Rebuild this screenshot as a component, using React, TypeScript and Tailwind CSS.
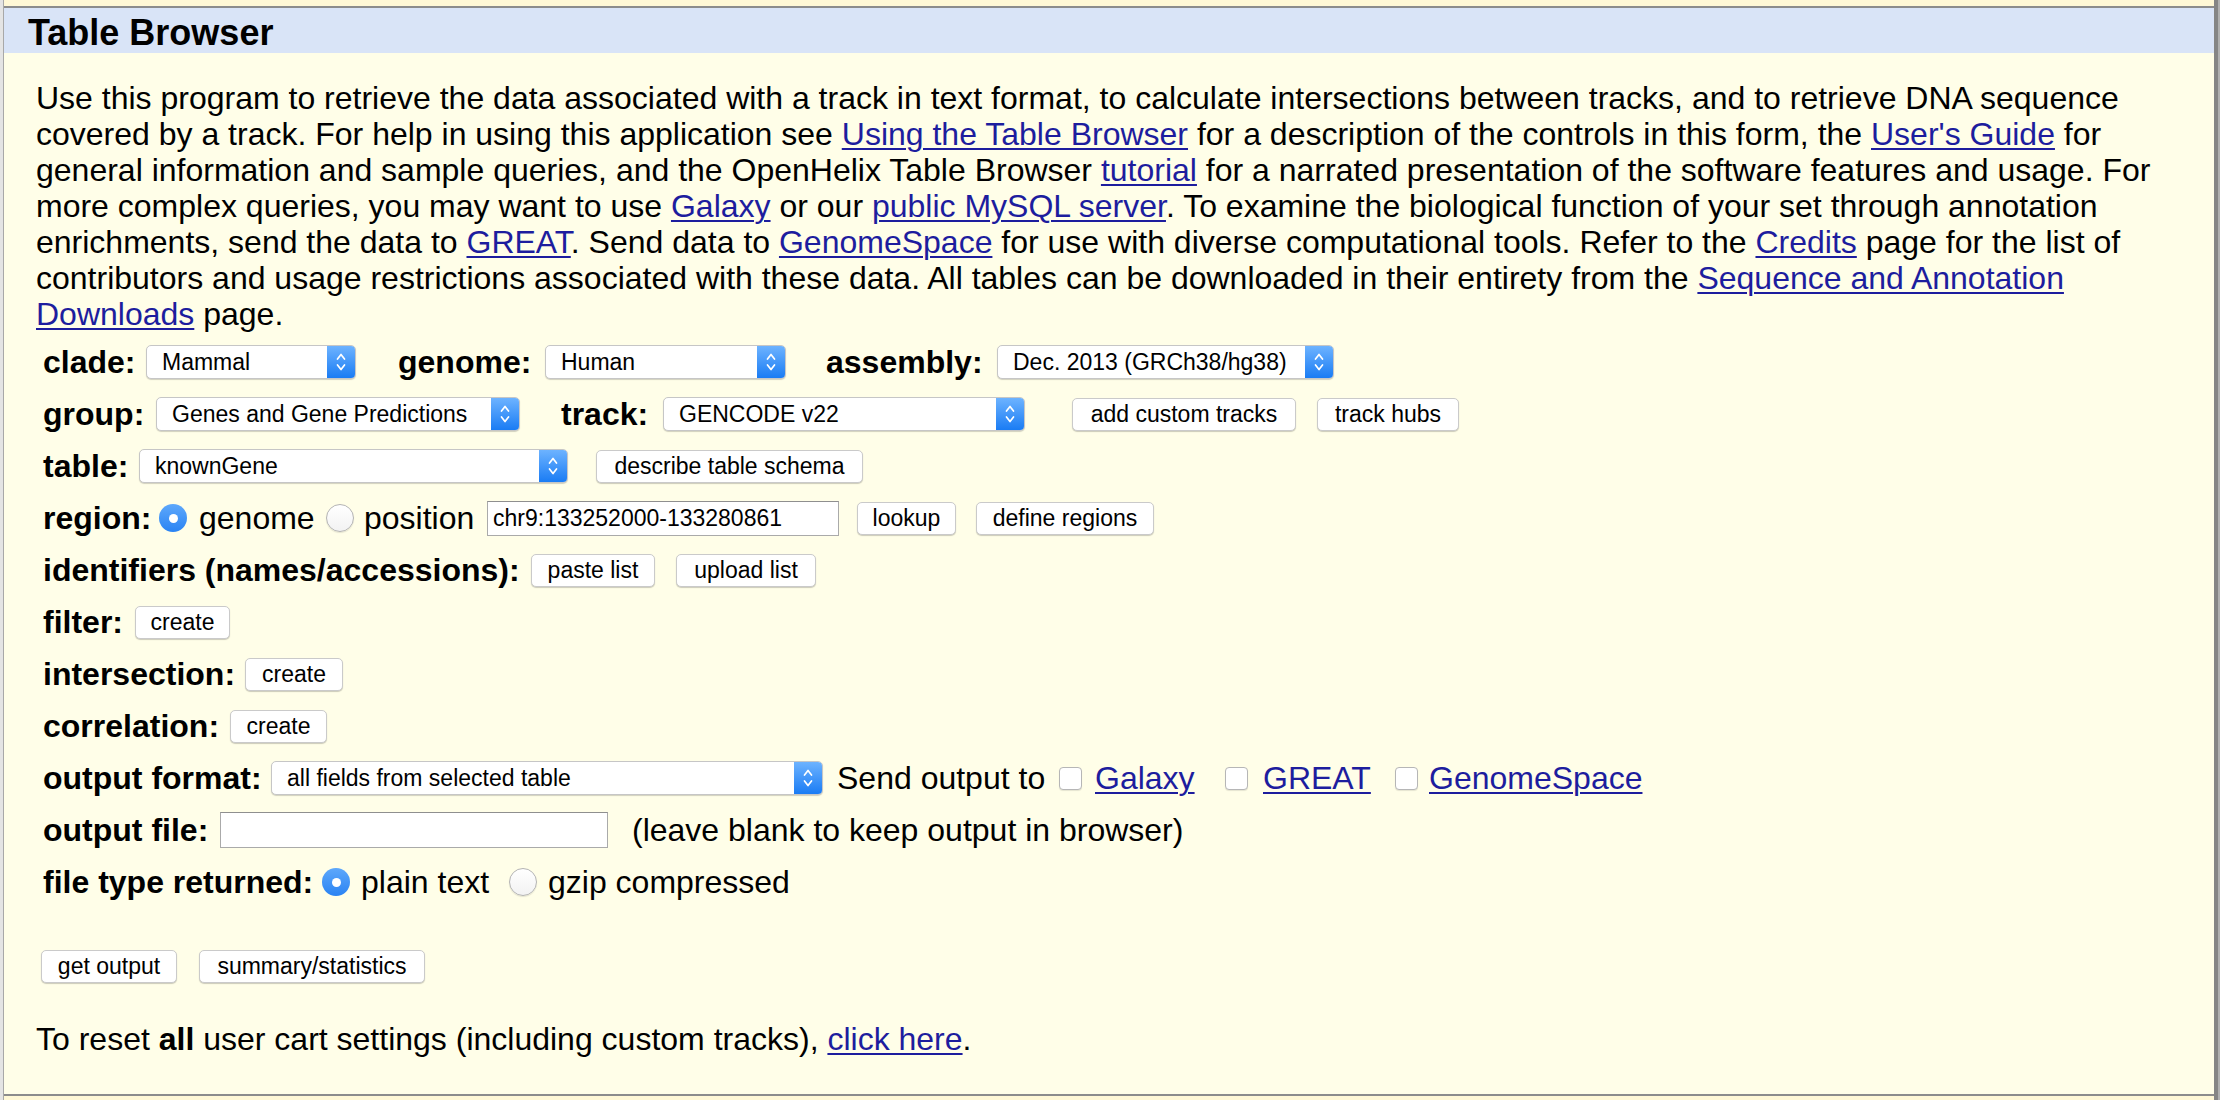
import React from "react";

// UCSC-style Table Browser form, Mac Safari look.

const LINK = "text-[#1d1d9e] underline decoration-[2px] underline-offset-[3px]";

function Label({ className = "", children }: { className?: string; children: React.ReactNode }) {
  return <span className={`font-bold text-[32px] leading-[36px] whitespace-nowrap shrink-0 ${className}`}>{children}</span>;
}

function Text({ className = "", children }: { className?: string; children: React.ReactNode }) {
  return <span className={`text-[32px] leading-[36px] whitespace-nowrap shrink-0 ${className}`}>{children}</span>;
}

function Select({ className = "", value }: { className?: string; value: string }) {
  return (
    <div
      className={`flex h-[34px] shrink-0 bg-white rounded-[5px] border border-[#c6c6c6] shadow-[0_1px_1px_rgba(0,0,0,0.18)] overflow-hidden ${className}`}
    >
      <span className="flex-1 pl-[15px] text-[23px] leading-[32px] whitespace-nowrap overflow-hidden">{value}</span>
      <span className="w-[28px] flex items-center justify-center bg-[linear-gradient(#6db3ff,#1a7cf4)]">
        <svg width="12" height="22" viewBox="0 0 12 22" fill="none" stroke="white" strokeWidth="1.7" strokeLinecap="round" strokeLinejoin="round">
          <path d="M2.5 8 L6 3.5 L9.5 8" />
          <path d="M2.5 14 L6 18.5 L9.5 14" />
        </svg>
      </span>
    </div>
  );
}

function Btn({ className = "", children }: { className?: string; children: React.ReactNode }) {
  return (
    <span
      className={`flex items-center justify-center h-[33px] shrink-0 bg-white rounded-[5px] border border-[#cacaca] shadow-[0_1px_1px_rgba(0,0,0,0.2)] text-[23px] whitespace-nowrap ${className}`}
    >
      {children}
    </span>
  );
}

function Radio({ checked = false, className = "" }: { checked?: boolean; className?: string }) {
  return checked ? (
    <span className={`w-[28px] h-[28px] shrink-0 rounded-full bg-[linear-gradient(#5ea8fb,#2a83f3)] flex items-center justify-center ${className}`}>
      <span className="w-[9px] h-[9px] rounded-full bg-white" />
    </span>
  ) : (
    <span className={`w-[28px] h-[28px] shrink-0 rounded-full bg-[linear-gradient(#ffffff,#f2f2f2)] border border-[#b4b4b4] shadow-[0_1px_1px_rgba(0,0,0,0.1)] ${className}`} />
  );
}

function Check({ className = "" }: { className?: string }) {
  return <span className={`w-[23px] h-[23px] shrink-0 rounded-[4px] bg-white border border-[#b6b6b6] shadow-[0_1px_1px_rgba(0,0,0,0.1)] ${className}`} />;
}

function Row({ children }: { children: React.ReactNode }) {
  return <div className="flex items-center h-[52px] pl-[39px]">{children}</div>;
}

export default function App() {
  return (
    <div className="w-[2220px] h-[1100px] flex bg-[#fff8d6] text-black font-['Liberation_Sans',Arial,sans-serif] overflow-hidden">
      {/* left frame edge */}
      <div className="w-[4px] shrink-0 bg-[#e4e4e4] border-r border-[#a8a8a8]" />

      <div className="flex-1 flex flex-col pt-[6px] pb-[4px]">
        <div className="flex-1 flex flex-col bg-[#fffee8] border-t-[2px] border-b-[2px] border-[#8c8c8c]">
          {/* ━━━ HEADER ━━━ */}
          <div className="h-[45px] bg-[#d9e4f7] pl-[24px] pt-[5px]">
            <h1 className="font-bold text-[36px] leading-[40px]">Table Browser</h1>
          </div>

          {/* ━━━ INTRO ━━━ */}
          <p className="mt-[27px] pl-[32px] text-[32px] leading-[36px] whitespace-nowrap">
            Use this program to retrieve the data associated with a track in text format, to calculate intersections between tracks, and to retrieve DNA sequence
            <br />
            covered by a track. For help in using this application see <a className={LINK}>Using the Table Browser</a> for a description of the controls in this form, the{" "}
            <a className={LINK}>User's Guide</a> for
            <br />
            general information and sample queries, and the OpenHelix Table Browser <a className={LINK}>tutorial</a> for a narrated presentation of the software features and usage. For
            <br />
            more complex queries, you may want to use <a className={LINK}>Galaxy</a> or our <a className={LINK}>public MySQL server</a>. To examine the biological function of your set through annotation
            <br />
            enrichments, send the data to <a className={LINK}>GREAT</a>. Send data to <a className={LINK}>GenomeSpace</a> for use with diverse computational tools. Refer to the{" "}
            <a className={LINK}>Credits</a> page for the list of
            <br />
            contributors and usage restrictions associated with these data. All tables can be downloaded in their entirety from the{" "}
            <a className={LINK}>
              Sequence and Annotation
              <br />
              Downloads
            </a>{" "}
            page.
          </p>

          {/* ━━━ FORM ━━━ */}
          <div className="mt-[4px] flex flex-col">
            <Row>
              <Label className="w-[103px]">clade:</Label>
              <Select className="w-[210px]" value="Mammal" />
              <Label className="ml-[42px] w-[147px]">genome:</Label>
              <Select className="w-[241px]" value="Human" />
              <Label className="ml-[40px] w-[171px]">assembly:</Label>
              <Select className="w-[337px]" value="Dec. 2013 (GRCh38/hg38)" />
            </Row>

            <Row>
              <Label className="w-[113px]">group:</Label>
              <Select className="w-[364px]" value="Genes and Gene Predictions" />
              <Label className="ml-[41px] w-[102px]">track:</Label>
              <Select className="w-[362px]" value="GENCODE v22" />
              <Btn className="ml-[47px] w-[224px]">add custom tracks</Btn>
              <Btn className="ml-[21px] w-[142px]">track hubs</Btn>
            </Row>

            <Row>
              <Label className="w-[96px]">table:</Label>
              <Select className="w-[429px]" value="knownGene" />
              <Btn className="ml-[28px] w-[267px]">describe table schema</Btn>
            </Row>

            <Row>
              <Label className="w-[116px]">region:</Label>
              <Radio checked />
              <Text className="ml-[12px] w-[127px]">genome</Text>
              <Radio />
              <Text className="ml-[10px] w-[123px]">position</Text>
              <input
                readOnly
                value="chr9:133252000-133280861"
                className="w-[352px] h-[35px] shrink-0 bg-white border border-[#aaaaaa] border-t-[#8f8f8f] pl-[5px] text-[23px] outline-none"
              />
              <Btn className="ml-[18px] w-[99px]">lookup</Btn>
              <Btn className="ml-[20px] w-[178px]">define regions</Btn>
            </Row>

            <Row>
              <Label className="w-[488px]">identifiers (names/accessions):</Label>
              <Btn className="w-[124px]">paste list</Btn>
              <Btn className="ml-[21px] w-[140px]">upload list</Btn>
            </Row>

            <Row>
              <Label className="w-[92px]">filter:</Label>
              <Btn className="w-[95px]">create</Btn>
            </Row>

            <Row>
              <Label className="w-[202px]">intersection:</Label>
              <Btn className="w-[98px]">create</Btn>
            </Row>

            <Row>
              <Label className="w-[187px]">correlation:</Label>
              <Btn className="w-[97px]">create</Btn>
            </Row>

            <Row>
              <Label className="w-[228px]">output format:</Label>
              <Select className="w-[552px]" value="all fields from selected table" />
              <Text className="ml-[14px] w-[222px]">Send output to</Text>
              <Check />
              <span className="ml-[13px] w-[130px] shrink-0 text-[32px] leading-[36px]">
                <a className={LINK}>Galaxy</a>
              </span>
              <Check />
              <span className="ml-[15px] w-[132px] shrink-0 text-[32px] leading-[36px]">
                <a className={LINK}>GREAT</a>
              </span>
              <Check />
              <span className="ml-[11px] shrink-0 text-[32px] leading-[36px] whitespace-nowrap">
                <a className={LINK}>GenomeSpace</a>
              </span>
            </Row>

            <Row>
              <Label className="w-[177px]">output file:</Label>
              <input readOnly value="" className="w-[388px] h-[36px] shrink-0 bg-white border border-[#aaaaaa] border-t-[#8f8f8f] outline-none" />
              <Text className="ml-[24px]">(leave blank to keep output in browser)</Text>
            </Row>

            <Row>
              <Label className="w-[279px]">file type returned:</Label>
              <Radio checked />
              <Text className="ml-[11px] w-[148px]">plain text</Text>
              <Radio />
              <Text className="ml-[11px]">gzip compressed</Text>
            </Row>
          </div>

          {/* ━━━ ACTIONS ━━━ */}
          <div className="mt-[42px] flex items-center pl-[37px]">
            <Btn className="w-[136px]">get output</Btn>
            <Btn className="ml-[22px] w-[226px]">summary/statistics</Btn>
          </div>

          <p className="mt-[38px] pl-[32px] text-[32px] leading-[36px] whitespace-nowrap">
            To reset <b>all</b> user cart settings (including custom tracks), <a className={LINK}>click here</a>.
          </p>
        </div>
      </div>

      {/* right frame edge */}
      <div className="w-[4px] shrink-0 bg-[#858585]" />
      <div className="w-[2px] shrink-0 bg-[#b0b0b0]" />
    </div>
  );
}
